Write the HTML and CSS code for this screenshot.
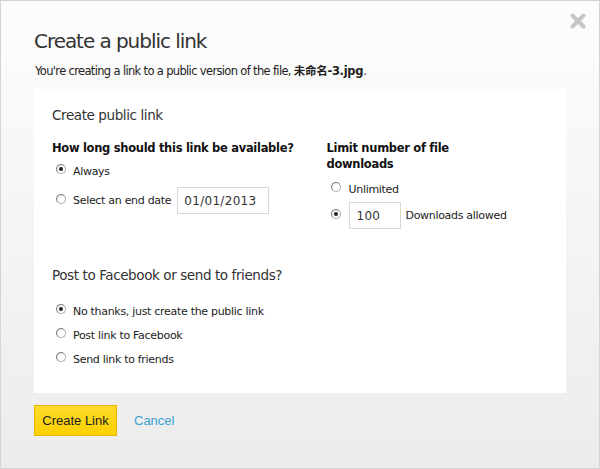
FILE: index.html
```html
<!DOCTYPE html>
<html>
<head>
<meta charset="utf-8">
<link rel="stylesheet" href="styles.css">
</head>
<body>
<div class="dialog">
  <svg class="close" width="16" height="16" viewBox="0 0 16 16"><path d="M2.5 2.5 L13.5 13.5 M13.5 2.5 L2.5 13.5" stroke="#c6c6c6" stroke-width="4" stroke-linecap="round"/></svg>
  <h1 class="title">Create a public link</h1>
  <p class="intro">You're creating a link to a public version of the file, <b>未命名-3.jpg</b>.</p>
  <div class="panel">
    <h2 class="section">Create public link</h2>
    <div class="cols">
      <div class="col col-left">
        <h3 class="question">How long should this link be available?</h3>
        <div class="opt"><span class="radio on"></span><span>Always</span></div>
        <div class="opt"><span class="radio"></span><span>Select an end date</span><span class="field date">01/01/2013</span></div>
      </div>
      <div class="col col-right">
        <h3 class="question">Limit number of file downloads</h3>
        <div class="opt"><span class="radio"></span><span>Unlimited</span></div>
        <div class="opt"><span class="radio on"></span><span class="field count">100</span><span>Downloads allowed</span></div>
      </div>
    </div>
    <h2 class="section fb">Post to Facebook or send to friends?</h2>
    <div class="list">
      <div class="opt"><span class="radio on"></span><span>No thanks, just create the public link</span></div>
      <div class="opt"><span class="radio"></span><span>Post link to Facebook</span></div>
      <div class="opt"><span class="radio"></span><span>Send link to friends</span></div>
    </div>
  </div>
  <div class="actions">
    <span class="btn-primary">Create Link</span>
    <span class="cancel">Cancel</span>
  </div>
</div>
</body>
</html>
```
FILE: styles.css
```css
html, body { margin: 0; padding: 0; }
body { font-family: "DejaVu Sans", Verdana, sans-serif; color: #222; }
.dialog {
  position: relative;
  box-sizing: border-box;
  width: 600px;
  height: 469px;
  border: 1px solid #d4d4d4;
  background: linear-gradient(#fdfdfd 0%, #f6f6f6 40%, #ececec 100%);
  padding: 28px 0 0 33px;
}
.close {
  position: absolute;
  right: 13px;
  top: 12px;
}
.title {
  margin: 0;
  font-size: 20px;
  font-weight: normal;
  color: #333;
  line-height: 24px;
  letter-spacing: -1.05px;
}
.intro {
  margin: 10px 0 0 1px;
  font-size: 11.5px;
  line-height: 16px;
  color: #222;
  letter-spacing: -0.66px;
}
.intro b { font-family: "DejaVu Sans", "Noto Sans CJK SC", sans-serif; letter-spacing: -0.3px; }
.panel {
  margin-top: 10px;
  width: 532px;
  height: 304px;
  box-sizing: border-box;
  background: #fff;
  padding: 17px 0 0 18px;
}
.section {
  margin: 0;
  font-size: 13.5px;
  font-weight: normal;
  color: #333;
  line-height: 18px;
  letter-spacing: -0.4px;
}
.cols { display: flex; margin-top: 16px; }
.col-left { width: 275px; }
.col-right { width: 240px; }
.col-right .question { width: 135px; }
.question {
  margin: 0 0 4px;
  font-size: 11.5px;
  font-weight: bold;
  line-height: 16px;
  color: #111;
  letter-spacing: -0.3px;
}
.opt {
  display: flex;
  align-items: center;
  font-size: 11px;
  color: #222;
  min-height: 22px;
  letter-spacing: -0.3px;
  margin-left: 4px;
}
.col-right .opt { margin-left: 5px; }
.radio {
  box-sizing: border-box;
  width: 10px;
  height: 10px;
  border-radius: 50%;
  border: 1px solid #7e7e7e;
  border-bottom-color: #aaa;
  border-right-color: #aaa;
  background: radial-gradient(circle at 60% 65%, #fff 40%, #d8d8d8 100%);
  margin-right: 7px;
  flex: none;
  position: relative;
  top: -2px;
}
.radio.on::after {
  content: "";
  position: absolute;
  left: 2px; top: 2px;
  width: 4px; height: 4px;
  border-radius: 50%;
  background: #222;
}
.col-left .opt + .opt { margin-top: 5px; }
.col-right .opt:first-of-type { margin-top: 6px; }
.col-right .opt + .opt { margin-top: 2px; }
.col-right .opt + .opt .radio { margin-right: 8px; }
.field {
  box-sizing: border-box;
  display: inline-flex;
  align-items: center;
  height: 27px;
  border: 1px solid #d8d8d8;
  padding-left: 6px;
  font-size: 12px;
  color: #333;
  letter-spacing: 0.3px;
}
.date { width: 92px; margin-left: 6px; }
.count { width: 52px; margin-right: 4px; }
.fb { margin-top: 37px; }
.list { margin-top: 16px; }
.list .opt + .opt { margin-top: 2px; }
.actions {
  display: flex;
  align-items: center;
  margin-top: 12px;
}
.btn-primary {
  box-sizing: border-box;
  width: 83px;
  height: 31px;
  display: inline-flex;
  align-items: center;
  justify-content: center;
  background: linear-gradient(#ffdb2a, #fcd000);
  border: 1px solid #e6b400;
  font-family: "Liberation Sans", Arial, sans-serif;
  font-size: 13px;
  color: #222;
}
.cancel {
  margin-left: 17px;
  font-family: "Liberation Sans", Arial, sans-serif;
  font-size: 13px;
  color: #3a9fd0;
}
```
